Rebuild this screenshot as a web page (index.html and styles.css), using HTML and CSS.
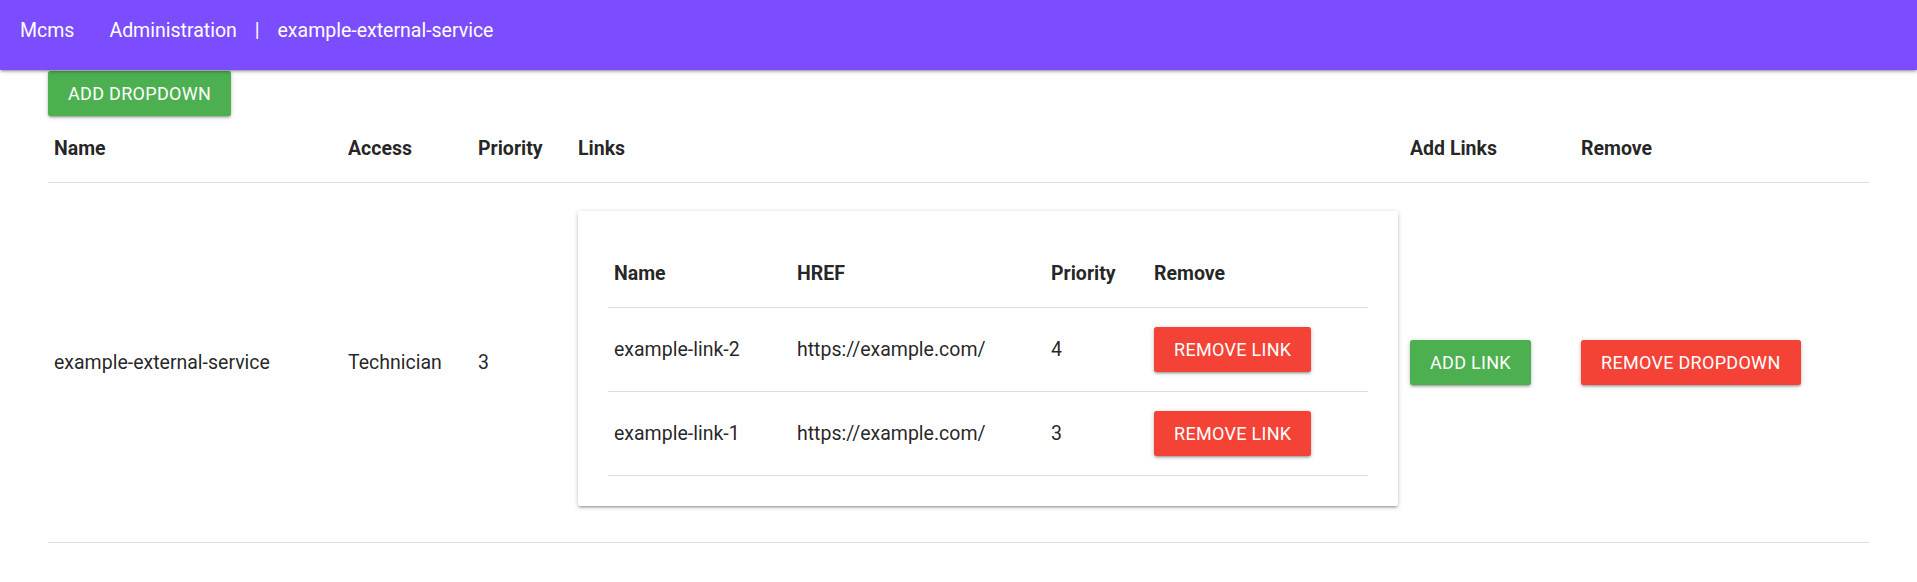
FILE: index.html
```html
<!DOCTYPE html>
<html>
<head>
<meta charset="utf-8">
<link rel="stylesheet" href="styles.css">
</head>
<body>
<nav class="nav">
  <span class="brand">Mcms</span>
  <span class="crumb">Administration</span>
  <span class="sep">|</span>
  <span class="crumb-last">example-external-service</span>
</nav>
<main class="container">
  <a class="btn btn-green">Add Dropdown</a>
  <table class="table">
    <colgroup>
      <col class="c-name"><col class="c-access"><col class="c-prio"><col class="c-links"><col class="c-add"><col class="c-remove">
    </colgroup>
    <thead>
      <tr><th>Name</th><th>Access</th><th>Priority</th><th>Links</th><th>Add Links</th><th>Remove</th></tr>
    </thead>
    <tbody>
      <tr>
        <td>example-external-service</td>
        <td>Technician</td>
        <td>3</td>
        <td>
          <div class="card">
            <table class="table inner">
              <colgroup>
                <col class="i-name"><col class="i-href"><col class="i-prio"><col class="i-remove">
              </colgroup>
              <thead>
                <tr><th>Name</th><th>HREF</th><th>Priority</th><th>Remove</th></tr>
              </thead>
              <tbody>
                <tr><td>example-link-2</td><td>https://example.com/</td><td>4</td><td><a class="btn btn-red">Remove Link</a></td></tr>
                <tr><td>example-link-1</td><td>https://example.com/</td><td>3</td><td><a class="btn btn-red">Remove Link</a></td></tr>
              </tbody>
            </table>
          </div>
        </td>
        <td><a class="btn btn-green">Add Link</a></td>
        <td><a class="btn btn-red">Remove Dropdown</a></td>
      </tr>
    </tbody>
  </table>
</main>
</body>
</html>
```
FILE: styles.css
```css
html, body {
  margin: 0;
  padding: 0;
  background: #fff;
}
body {
  font-family: Roboto, "Noto Sans", sans-serif;
  font-size: 19.5px;
  line-height: 28px;
  color: rgba(0, 0, 0, 0.87);
}
.nav {
  height: 70px;
  background: #7c4dff;
  color: #fff;
  display: flex;
  align-items: flex-start;
  line-height: 62px;
  font-size: 19.5px;
  padding-left: 20px;
  box-shadow: 0 2px 2px 0 rgba(0,0,0,0.14), 0 3px 1px -2px rgba(0,0,0,0.12), 0 1px 5px 0 rgba(0,0,0,0.2);
  position: relative;
  z-index: 1;
}
.brand { margin-right: 35px; }
.sep { margin: 0 18px 0 18px; }
.container {
  padding: 1px 48px 0;
}
.btn {
  display: inline-block;
  height: 45px;
  line-height: 45px;
  padding: 0 20px;
  font-size: 18px;
  letter-spacing: 0.3px;
  text-transform: uppercase;
  color: #fff;
  border-radius: 2.5px;
  box-shadow: 0 2px 2px 0 rgba(0,0,0,0.14), 0 3px 1px -2px rgba(0,0,0,0.12), 0 1px 5px 0 rgba(0,0,0,0.2);
  vertical-align: middle;
  white-space: nowrap;
}
.btn-green { background: #4caf50; }
.btn-red { background: #f44336; }
.table {
  width: 100%;
  border-collapse: collapse;
  table-layout: fixed;
}
.table th, .table td {
  text-align: left;
  vertical-align: middle;
  padding: 19px 6px;
  border-bottom: 1px solid rgba(0,0,0,0.12);
}
.table th { font-weight: bold; }
.c-name { width: 294px; }
.c-access { width: 130px; }
.c-prio { width: 100px; }
.c-links { width: 832px; }
.c-add { width: 171px; }
.card {
  background: #fff;
  border-radius: 2.5px;
  margin: 9px 0 17px;
  padding: 30px;
  box-shadow: 0 2px 2px 0 rgba(0,0,0,0.14), 0 3px 1px -2px rgba(0,0,0,0.12), 0 1px 5px 0 rgba(0,0,0,0.2);
}
.i-name { width: 183px; }
.i-href { width: 254px; }
.i-prio { width: 103px; }
```
